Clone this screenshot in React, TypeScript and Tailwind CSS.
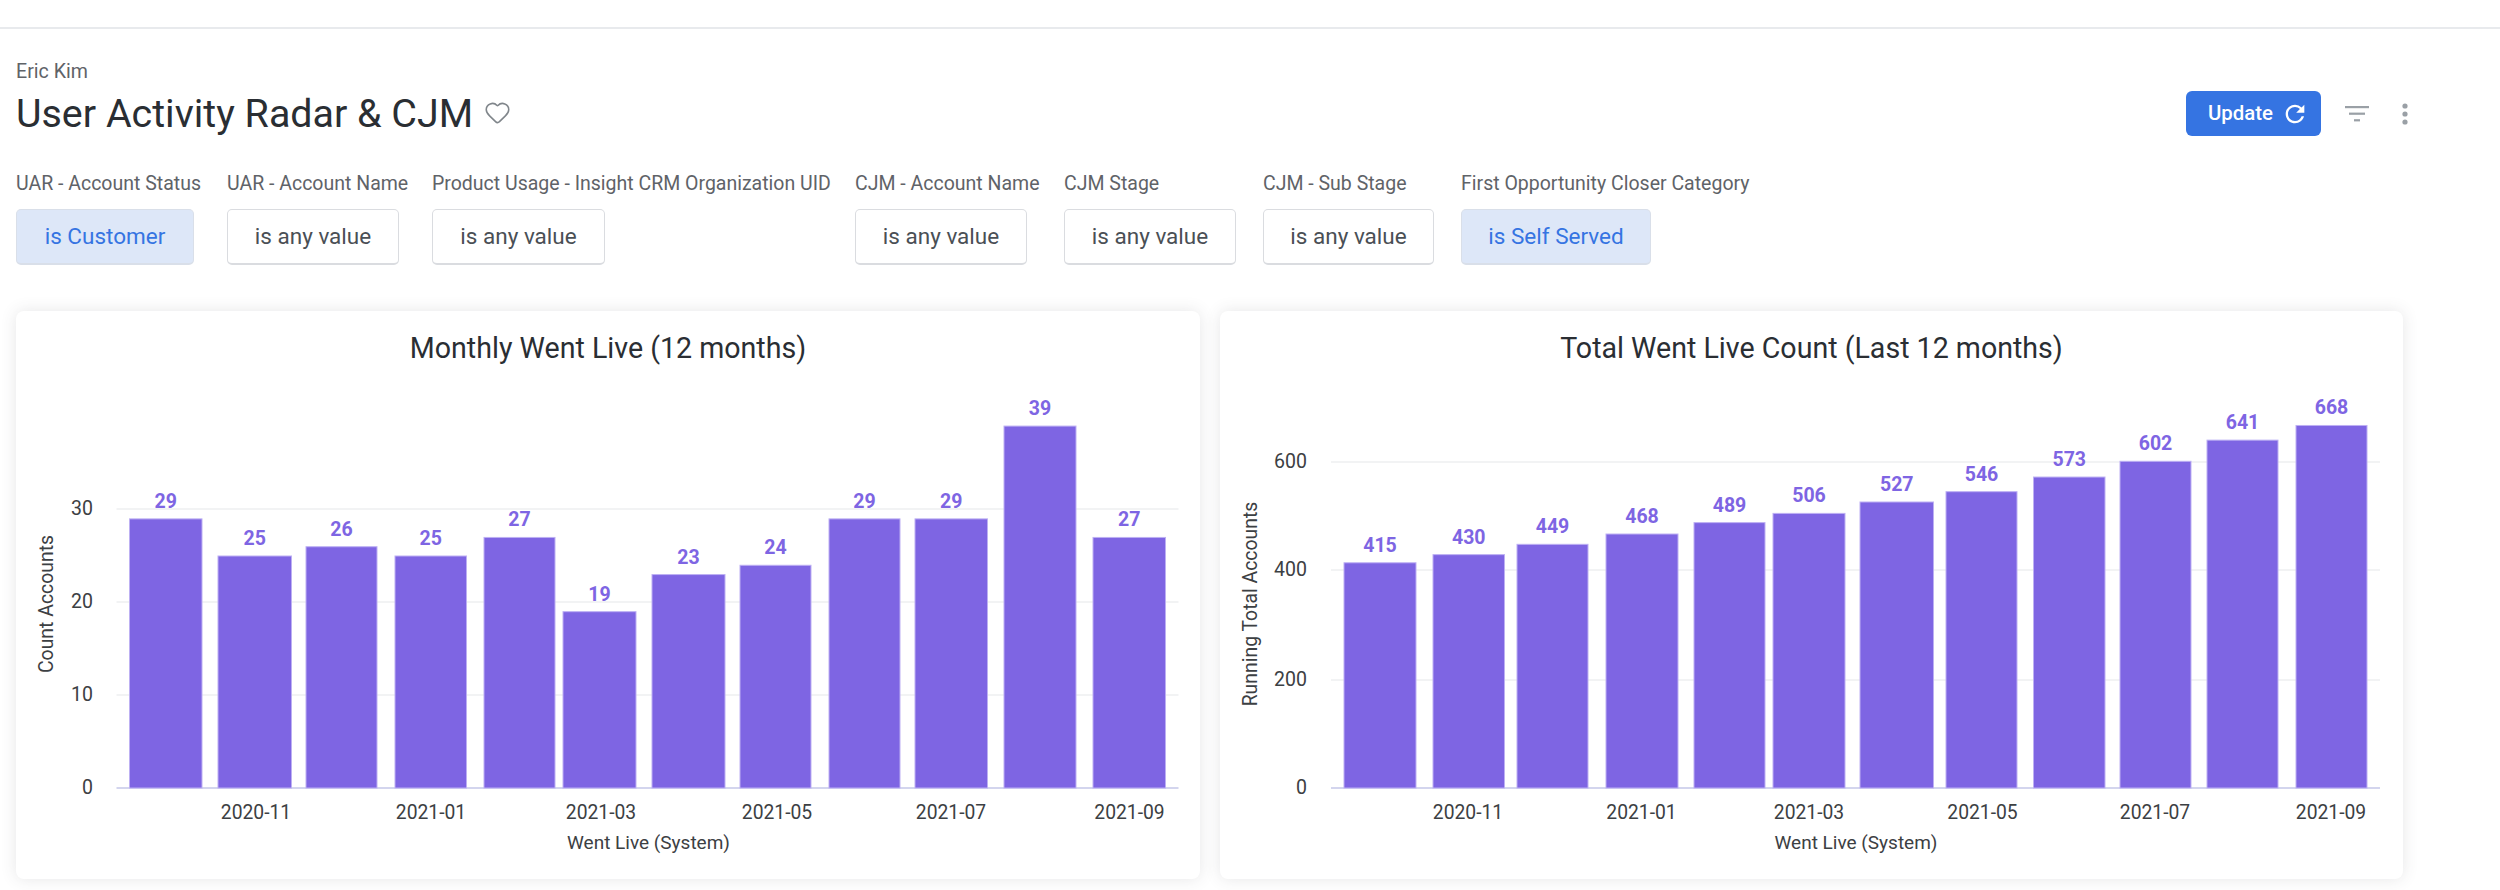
import { Heart } from 'lucide-react';

const filters = [
  { label: 'UAR - Account Status', value: 'is Customer', active: true, col: 'w-[184px]', btn: 'w-[178px]' },
  { label: 'UAR - Account Name', value: 'is any value', active: false, col: 'w-[178px]', btn: 'w-[172px]' },
  { label: 'Product Usage - Insight CRM Organization UID', value: 'is any value', active: false, col: 'w-[396px]', btn: 'w-[173px]' },
  { label: 'CJM - Account Name', value: 'is any value', active: false, col: 'w-[182px]', btn: 'w-[172px]' },
  { label: 'CJM Stage', value: 'is any value', active: false, col: 'w-[172px]', btn: 'w-[172px]' },
  { label: 'CJM - Sub Stage', value: 'is any value', active: false, col: 'w-[171px]', btn: 'w-[171px]' },
  { label: 'First Opportunity Closer Category', value: 'is Self Served', active: true, col: 'w-[290px]', btn: 'w-[190px]' },
];

const monthly = {
  title: 'Monthly Went Live (12 months)',
  yTitle: 'Count Accounts',
  originX: 16,
  width: 1184,
  gridFrom: 116.5,
  gridTo: 1178.5,
  yLabelX: 93,
  yTitleX: 46,
  xTitleX: 648.5,
  scale: 9.28,
  ticks: [
    { label: '30', y: 510 },
    { label: '20', y: 603 },
    { label: '10', y: 696 },
    { label: '0', y: 789 },
  ],
  bars: [
    [129.5, 202, 29],
    [218, 291.5, 25],
    [306, 377, 26],
    [395, 466.5, 25],
    [484, 555, 27],
    [563, 636, 19],
    [652, 725, 23],
    [740, 811, 24],
    [829, 900, 29],
    [915, 987.5, 29],
    [1004, 1076, 39],
    [1093, 1165.5, 27],
  ],
  months: [
    { label: '2020-11', x: 256 },
    { label: '2021-01', x: 431 },
    { label: '2021-03', x: 601 },
    { label: '2021-05', x: 777 },
    { label: '2021-07', x: 951 },
    { label: '2021-09', x: 1129.5 },
  ],
};

const running = {
  title: 'Total Went Live Count (Last 12 months)',
  yTitle: 'Running Total Accounts',
  originX: 1220,
  width: 1183,
  gridFrom: 1331,
  gridTo: 2380,
  yLabelX: 1307,
  yTitleX: 1250,
  xTitleX: 1856,
  scale: 0.5427,
  ticks: [
    { label: '600', y: 463 },
    { label: '400', y: 571 },
    { label: '200', y: 681 },
    { label: '0', y: 789 },
  ],
  bars: [
    [1344, 1416, 415],
    [1433, 1504.5, 430],
    [1517, 1588, 449],
    [1606, 1678, 468],
    [1694, 1765, 489],
    [1773, 1845, 506],
    [1860, 1933.5, 527],
    [1946, 2017, 546],
    [2033.5, 2105, 573],
    [2120, 2191, 602],
    [2207, 2278, 641],
    [2296, 2367, 668],
  ],
  months: [
    { label: '2020-11', x: 1468 },
    { label: '2021-01', x: 1641.5 },
    { label: '2021-03', x: 1809 },
    { label: '2021-05', x: 1982.5 },
    { label: '2021-07', x: 2155 },
    { label: '2021-09', x: 2331 },
  ],
};

const BASELINE = 789;

function ChartCard({ chart, className }: { chart: typeof monthly; className: string }) {
  return (
    <div className={`flex h-[568px] flex-col rounded-lg bg-white shadow-[0_0_16px_rgba(60,64,67,0.13)] ${className}`}>
      <h2 className="h-[74px] pt-[20px] text-center text-[28.6px] leading-[34px] font-normal text-[#2a2e33]">
        {chart.title}
      </h2>
      {/* viewBox is in page pixels so the numbers above read straight off the screenshot */}
      <svg className="h-[494px] w-full" viewBox={`${chart.originX} 386 ${chart.width} 494`}>
        {chart.ticks.slice(0, 3).map((t) => (
          <line key={t.label} x1={chart.gridFrom} x2={chart.gridTo} y1={t.y} y2={t.y} stroke="#eeeff1" strokeWidth="1.5" />
        ))}
        <line x1={chart.gridFrom} x2={chart.gridTo} y1={BASELINE} y2={BASELINE} stroke="#d3d5ee" strokeWidth="2" />
        {chart.ticks.map((t) => (
          <text key={t.label} x={chart.yLabelX} y={t.y + 6} textAnchor="end" fontSize="19.5" fill="#3c4043">
            {t.label}
          </text>
        ))}
        {chart.bars.map(([x0, x1, v]) => {
          const top = BASELINE - v * chart.scale;
          return (
            <g key={x0}>
              <rect x={x0} y={top} width={x1 - x0} height={v * chart.scale} fill="#7e65e3" stroke="#bdb0f3" strokeWidth="1" />
              <text x={(x0 + x1) / 2} y={top - 11} textAnchor="middle" fontSize="19.5" fontWeight="700" fill="#7e65e3">
                {v}
              </text>
            </g>
          );
        })}
        {chart.months.map((m) => (
          <text key={m.label} x={m.x} y={820} textAnchor="middle" fontSize="19.3" fill="#3c4043">
            {m.label}
          </text>
        ))}
        <text x={chart.xTitleX} y={850} textAnchor="middle" fontSize="19" fill="#3c4043">
          Went Live (System)
        </text>
        <text
          x={chart.yTitleX}
          y={605}
          textAnchor="middle"
          fontSize="19.4"
          fill="#3c4043"
          transform={`rotate(-90 ${chart.yTitleX} 605)`}
          dominantBaseline="central"
        >
          {chart.yTitle}
        </text>
      </svg>
    </div>
  );
}

export default function App() {
  return (
    <div className="h-[890px] w-[2500px] overflow-hidden bg-white font-['Roboto',sans-serif]">
      <div className="h-[29px] border-b-2 border-[#e8eaed]" />

      <div className="flex items-end justify-between pl-4 pr-[92px]">
        <div>
          <p className="mt-[33px] text-[19.6px] leading-5 text-[#5f6368]">Eric Kim</p>
          <div className="mt-[10px] flex h-[45px] items-center gap-[11px]">
            <h1 className="-mt-[2px] text-[39.4px] leading-[45px] font-normal text-[#2a2e33]">User Activity Radar &amp; CJM</h1>
            <Heart size={27} strokeWidth={1.4} className="-mt-[5px] text-[#80868b]" />
          </div>
        </div>
        <div className="mb-[1px] flex items-center">
          <button className="flex h-[45px] w-[135px] items-center justify-center gap-[8px] rounded-md bg-[#3574e2] pl-[10px] text-[20.4px] font-medium text-white">
            Update
            <svg width="28" height="28" viewBox="0 0 24 24" fill="currentColor">
              <path d="M17.65 6.35A7.958 7.958 0 0012 4c-4.42 0-7.99 3.58-7.99 8s3.57 8 7.99 8c3.73 0 6.84-2.55 7.73-6h-2.08A5.99 5.99 0 0112 18c-3.31 0-6-2.69-6-6s2.69-6 6-6c1.66 0 3.14.69 4.22 1.78L13 11h7V4l-2.35 2.35z" />
            </svg>
          </button>
          <svg className="ml-[24px]" width="24" height="16" viewBox="0 0 24 16" fill="#9aa0a6">
            <rect x="0" y="0" width="24" height="2.2" />
            <rect x="4" y="6.6" width="16" height="2.2" />
            <rect x="9" y="13.2" width="6" height="2.2" />
          </svg>
          <svg className="ml-[33px]" width="6" height="22" viewBox="0 0 6 22" fill="#9aa0a6">
            <circle cx="3" cy="3" r="2.6" />
            <circle cx="3" cy="11" r="2.6" />
            <circle cx="3" cy="19" r="2.6" />
          </svg>
        </div>
      </div>

      <div className="mt-[37px] flex gap-[27px] pl-4">
        {filters.map((f) => (
          <div key={f.label} className={f.col}>
            <p className="whitespace-nowrap text-[19.5px] leading-5 text-[#5f6368]">{f.label}</p>
            {f.active ? (
              <div className={`mt-[15px] flex h-[56px] items-center justify-center rounded-[5px] border border-[#d9dfe9] border-b-2 bg-[#dde7f8] text-[22.5px] text-[#3574e2] ${f.btn}`}>
                {f.value}
              </div>
            ) : (
              <div className={`mt-[15px] flex h-[56px] items-center justify-center rounded-[5px] border border-[#dadce0] border-b-2 bg-white text-[22.5px] text-[#4a4f55] ${f.btn}`}>
                {f.value}
              </div>
            )}
          </div>
        ))}
      </div>

      <div className="mt-[46px] flex gap-5 pl-4">
        <ChartCard chart={monthly} className="w-[1184px]" />
        <ChartCard chart={running} className="w-[1183px]" />
      </div>
    </div>
  );
}
